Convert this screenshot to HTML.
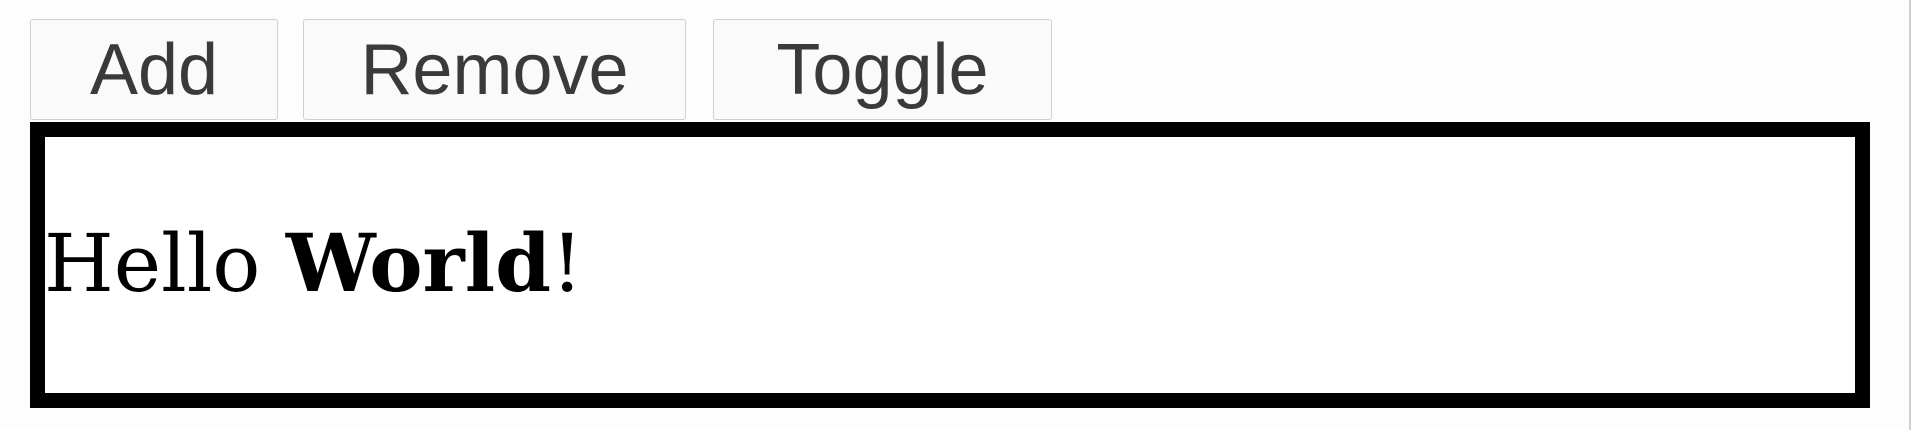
<!DOCTYPE html>
<html><head><meta charset="utf-8"><style>
html,body{margin:0;padding:0;background:#fdfdfd;width:1911px;height:430px;overflow:hidden;position:relative}
.btn{position:absolute;top:19px;height:101px;box-sizing:border-box;background:#fafafa;border:1px solid #cfcfcf;border-radius:3px;font-family:"Liberation Sans","DejaVu Sans",sans-serif;font-size:72px;color:#3a3a3a;text-align:center;line-height:101px;padding-top:0}
.box{position:absolute;left:30px;top:122px;width:1840px;height:286px;box-sizing:border-box;border:15px solid #000;background:#fff}
.txt{position:absolute;left:-1px;top:76px;font-family:"DejaVu Serif","Liberation Serif",serif;font-size:80px;line-height:100px;color:#000;white-space:nowrap}
.sb{position:absolute;left:1909px;top:0;width:2px;height:430px;background:#d0d0d0}
</style></head><body>
<div class="btn" style="left:30px;width:248px">Add</div>
<div class="btn" style="left:303px;width:383px">Remove</div>
<div class="btn" style="left:713px;width:339px">Toggle</div>
<div class="box"><div class="txt">Hello <b>World</b>!</div></div>
<div class="sb"></div>
</body></html>
